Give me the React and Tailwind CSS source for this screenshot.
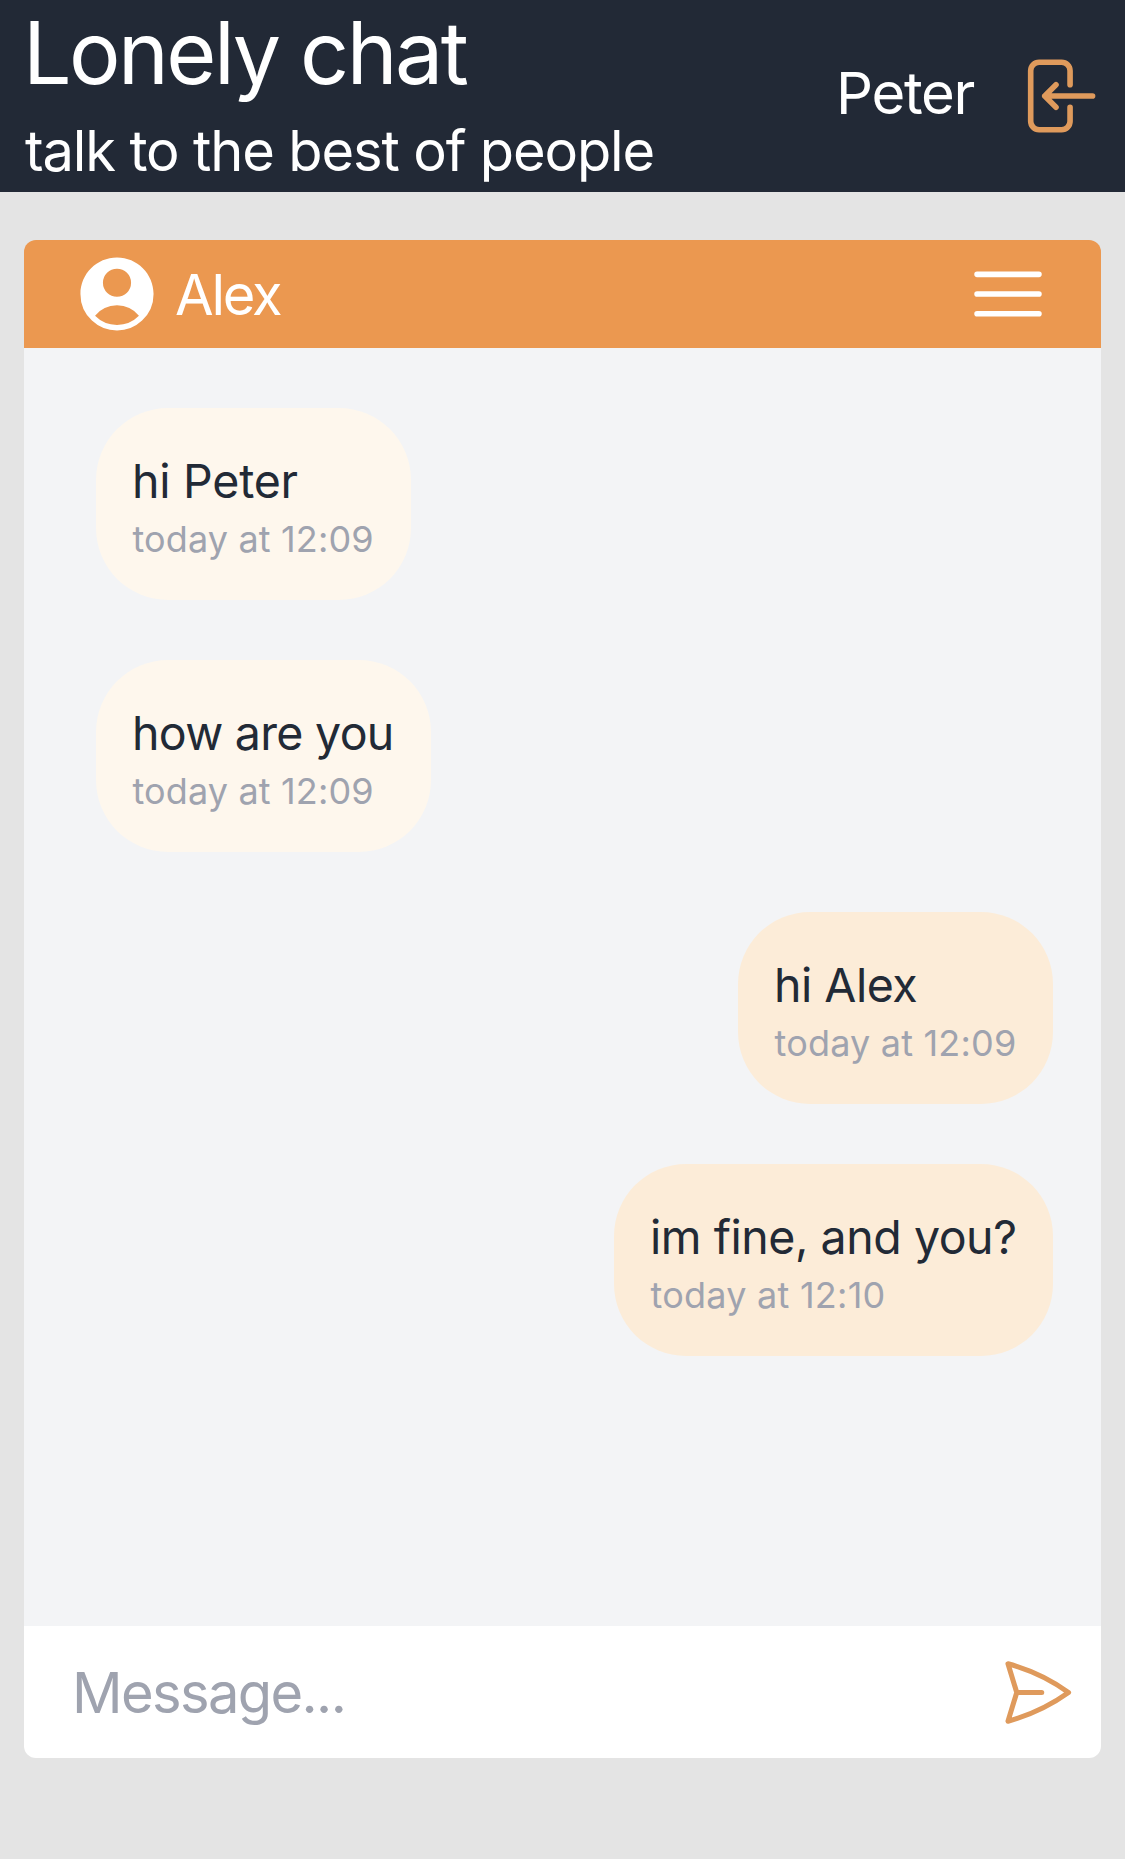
import React from "react";

const messages = [
  { text: "hi Peter", time: "today at 12:09", mine: false, width: "w-[315px]", tracking: "tracking-[-0.25px]", timeTracking: "tracking-[0.15px]" },
  { text: "how are you", time: "today at 12:09", mine: false, width: "w-[335px]", tracking: "tracking-[-0.7px]", timeTracking: "tracking-[0.15px]" },
  { text: "hi Alex", time: "today at 12:09", mine: true, width: "w-[315px]", tracking: "tracking-[-0.5px]", timeTracking: "tracking-[0.2px]" },
  { text: "im fine, and you?", time: "today at 12:10", mine: true, width: "w-[439px]", tracking: "tracking-[-0.45px]", timeTracking: "tracking-[0.25px]" },
];

function OutlineIcon({ d, className }) {
  return (
    <svg viewBox="0 0 24 24" fill="none" stroke="currentColor" strokeWidth="1.5" strokeLinecap="round" strokeLinejoin="round" className={className}>
      <path d={d} />
    </svg>
  );
}

function Header() {
  return (
    <header className="flex h-48 items-center justify-between bg-[#222936] px-6 text-white">
      <div className="flex flex-col">
        <h1 className="-ml-px mb-1 text-[86px] leading-[106px] tracking-[-2.55px] whitespace-nowrap">Lonely chat</h1>
        <p className="pl-px text-[56px] leading-[82px] tracking-[-1.14px] whitespace-nowrap">talk to the best of people</p>
      </div>
      <div className="flex items-center gap-9">
        <span className="w-[139px] pb-1.5 text-[58px] leading-[84px] tracking-[-1.3px] whitespace-nowrap">Peter</span>
        <button className="text-[#df9a5c]">
          <OutlineIcon className="size-[90px]" d="M15.75 9V5.25A2.25 2.25 0 0 0 13.5 3h-6a2.25 2.25 0 0 0-2.25 2.25v13.5A2.25 2.25 0 0 0 7.5 21h6a2.25 2.25 0 0 0 2.25-2.25V15M12 9l-3 3m0 0 3 3m-3-3h12.75" />
        </button>
      </div>
    </header>
  );
}

function ChatHeader() {
  return (
    <div className="flex h-[108px] items-center justify-between bg-[#eb9850] px-12 text-white">
      <div className="flex items-center gap-3">
        <svg viewBox="0 0 24 24" fill="currentColor" className="size-[90px]">
          <path fillRule="evenodd" clipRule="evenodd" d="M18.685 19.097A9.723 9.723 0 0 0 21.75 12c0-5.385-4.365-9.75-9.75-9.75S2.25 6.615 2.25 12a9.723 9.723 0 0 0 3.065 7.097A9.716 9.716 0 0 0 12 21.75a9.716 9.716 0 0 0 6.685-2.653Zm-12.54-1.285A7.486 7.486 0 0 1 12 15a7.486 7.486 0 0 1 5.855 2.812A8.224 8.224 0 0 1 12 20.25a8.224 8.224 0 0 1-5.855-2.438ZM15.75 9a3.75 3.75 0 1 1-7.5 0 3.75 3.75 0 0 1 7.5 0Z" />
        </svg>
        <span className="pt-0.5 pl-px text-[56px] leading-[84px] tracking-[-2.2px]">Alex</span>
      </div>
      <button>
        <OutlineIcon className="size-[90px]" d="M3.75 6.75h16.5M3.75 12h16.5m-16.5 5.25h16.5" />
      </button>
    </div>
  );
}

function Message({ text, time, mine, width, tracking, timeTracking }) {
  return (
    <li className={`h-48 rounded-[72px] p-9 whitespace-nowrap ${width} ${mine ? "self-end bg-[#fcecd8]" : "self-start bg-[#fef7ed]"}`}>
      <p className={`pt-0.5 text-[46.5px] leading-[70px] text-[#222a36] ${tracking}`}>{text}</p>
      <p className={`pl-[0.5px] text-[36px] leading-[46px] text-[#9fa3af] ${timeTracking}`}>{time}</p>
    </li>
  );
}

export default function App() {
  return (
    <div className="flex h-[1859px] flex-col bg-[#e4e4e4] font-[Inter,sans-serif]">
      <Header />
      <main className="mx-6 mt-12 flex h-[1518px] w-[1077px] flex-col overflow-hidden rounded-xl">
        <ChatHeader />
        <ul className="flex flex-1 flex-col gap-[60px] bg-[#f3f4f6] pt-[60px] pr-12 pl-[72px]">
          {messages.map((m) => (
            <Message key={m.text} {...m} />
          ))}
        </ul>
        <form className="flex h-[132px] items-center bg-white pr-6 pl-12">
          <input
            placeholder="Message..."
            className="h-[84px] min-w-0 flex-1 pt-0.5 text-[56px] tracking-[-1.6px] outline-none placeholder:text-[#9fa3af]"
          />
          <button type="button" className="text-[#df9a5c]">
            <OutlineIcon className="size-[81px]" d="M6.15 12 3.55 3.5A56 56 0 0 1 21.5 12 56 56 0 0 1 3.55 20.5L6.15 12Zm0 0h7.4" />
          </button>
        </form>
      </main>
    </div>
  );
}
